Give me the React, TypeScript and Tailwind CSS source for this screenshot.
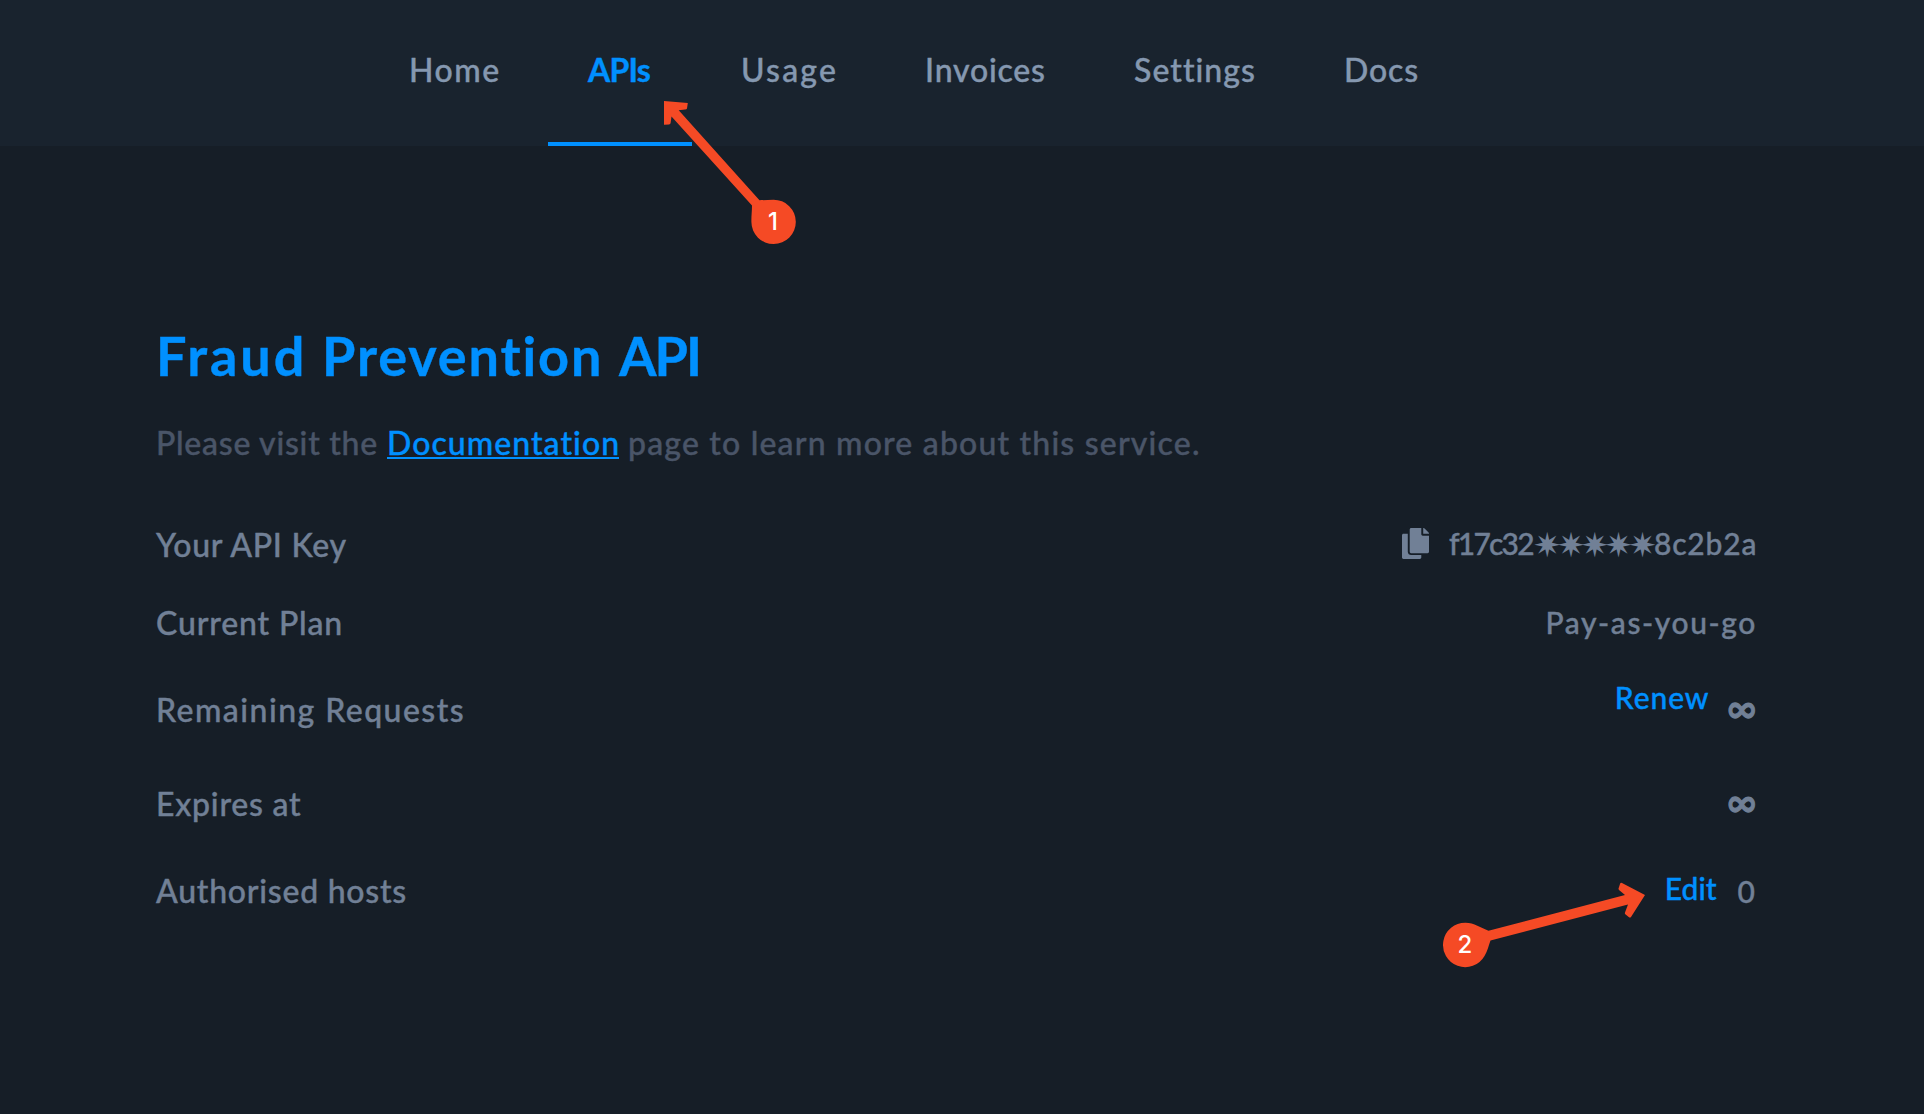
import React from "react";
import { FaCopy } from "react-icons/fa";

const tabs = [
  { label: "Home", box: "w-[172px]", text: "tracking-[1.5px]" },
  { label: "APIs", box: "w-[144px]", text: "tracking-[-0.8px]", active: true },
  { label: "Usage", box: "w-[176px]", text: "tracking-[2.2px]" },
  { label: "Invoices", box: "w-[201px]", text: "tracking-[0.8px]" },
  { label: "Settings", box: "w-[202px]", text: "tracking-[1.05px]" },
  { label: "Docs", box: "w-[152px]", text: "tracking-[0.9px]" },
];

function Row({
  label,
  height,
  tracking,
  children,
}: {
  label: string;
  height: string;
  tracking: string;
  children: React.ReactNode;
}) {
  return (
    <div className={`flex items-start justify-between ${height}`}>
      <span className={`text-[32px] leading-10 ${tracking}`}>{label}</span>
      <div className="flex items-start text-[30px] leading-10">{children}</div>
    </div>
  );
}

function Annotations() {
  return (
    <svg
      className="pointer-events-none absolute left-0 top-0 h-[1114px] w-[1924px]"
      viewBox="0 0 1924 1114"
      fill="#f54a25"
    >
      <path d="M664 101L687.8 103L687 108.5Q686.7 109.5 685 109.6L678.7 110.3L759.5 200.3C764 200.2 769 199.7 773.5 199.7A22.2 22.2 0 1 1 751.4 222C751.3 216 752 211 752 205.5L671.5 116.5L670.6 123Q670.4 124.3 669 124.4L664 124.8Z" />
      <path d="M1645 895L1631 917Q1630 918 1629 917.2L1625.3 914.3Q1624.6 913.6 1625 912.5L1628 904.5L1490.5 940.5C1488.5 946 1487.5 951 1484.5 956A22.2 22.2 0 1 1 1465.5 922.8C1474 922.8 1481 928 1488.5 930.8L1625 895L1619 890Q1618.3 889.3 1618.6 888.3L1620 884Q1620.6 882.4 1622 883Z" />
    </svg>
  );
}

export default function App() {
  return (
    <div className="relative h-[1114px] w-[1924px] overflow-hidden bg-[#161e27] font-['Lato','DejaVu_Sans',sans-serif] font-medium text-[#718096] [-webkit-text-stroke:0.4px]">
      <nav className="flex h-[146px] gap-2 bg-[#19232e] pl-[368px] text-[32px] leading-10 text-[#8598b0]">
        {tabs.map((t) => (
          <a
            key={t.label}
            className={`h-full pt-[50px] ${t.box} ${t.text} ${
              t.active
                ? "border-b-4 border-[#0090ff] pl-10 font-bold text-[#0090ff]"
                : "pl-[41px]"
            }`}
          >
            {t.label}
          </a>
        ))}
      </nav>

      <main className="ml-[156px] w-[1600px] pt-[176px]">
        <h1 className="flex text-[54px] font-bold leading-[68px] text-[#0090ff]">
          <span className="w-[166px] tracking-[2.9px]">Fraud</span>
          <span className="w-[297px] tracking-[1.9px]">Prevention</span>
          <span className="tracking-[-2px]">API</span>
        </h1>
        <p className="mt-[33px] flex text-[32px] leading-10 text-[#4a5568]">
          <span className="w-[231px] tracking-[0.73px]">Please visit the</span>
          <a className="h-[36px] w-[232px] border-b-2 border-[#0090ff] tracking-[1.05px] text-[#0090ff]">
            Documentation
          </a>
          <span className="ml-[9px] tracking-[1.18px]">
            page to learn more about this service.
          </span>
        </p>

        <section className="mt-[62px]">
          <Row label="Your API Key" height="h-[78px]" tracking="tracking-[0.7px]">
            <FaCopy className="mr-5 mt-[3px] h-[31px] w-[27px]" />
            <span className="-mt-0.5 w-[84px] tracking-[-1.8px]">f17c32</span>
            <span className="w-[121px] font-['DejaVu_Sans'] text-[34px] tracking-[-4.7px] [-webkit-text-stroke:0]">
              ✷✷✷✷✷
            </span>
            <span className="-mt-0.5 w-[102px] tracking-[0.8px]">8c2b2a</span>
          </Row>
          <Row label="Current Plan" height="h-[87px]" tracking="tracking-[0.85px]">
            <span className="-mr-px -mt-px tracking-[1.6px]">Pay-as-you-go</span>
          </Row>
          <Row label="Remaining Requests" height="h-[94px]" tracking="tracking-[1.45px]">
            <a className="-mt-[13px] mr-[18px] tracking-[0.93px] text-[#0090ff]">Renew</a>
            <span className="-mt-0.5 scale-y-125 font-['Inter'] [-webkit-text-stroke:1px]">∞</span>
          </Row>
          <Row label="Expires at" height="h-[87px]" tracking="tracking-[0.76px]">
            <span className="-mt-0.5 scale-y-125 font-['Inter'] [-webkit-text-stroke:1px]">∞</span>
          </Row>
          <Row label="Authorised hosts" height="h-10" tracking="tracking-[0.75px]">
            <a className="-mt-[3px] mr-[21px] text-[#0090ff]">Edit</a>
            <span className="mr-px">0</span>
          </Row>
        </section>
      </main>

      <Annotations />
      <span className="absolute left-[751px] top-[200px] w-11 text-center font-['Inter'] text-[24px] leading-[44px] text-white [-webkit-text-stroke:0]">
        1
      </span>
      <span className="absolute left-[1443px] top-[923px] w-11 text-center font-['Inter'] text-[24px] leading-[44px] text-white [-webkit-text-stroke:0]">
        2
      </span>
    </div>
  );
}
